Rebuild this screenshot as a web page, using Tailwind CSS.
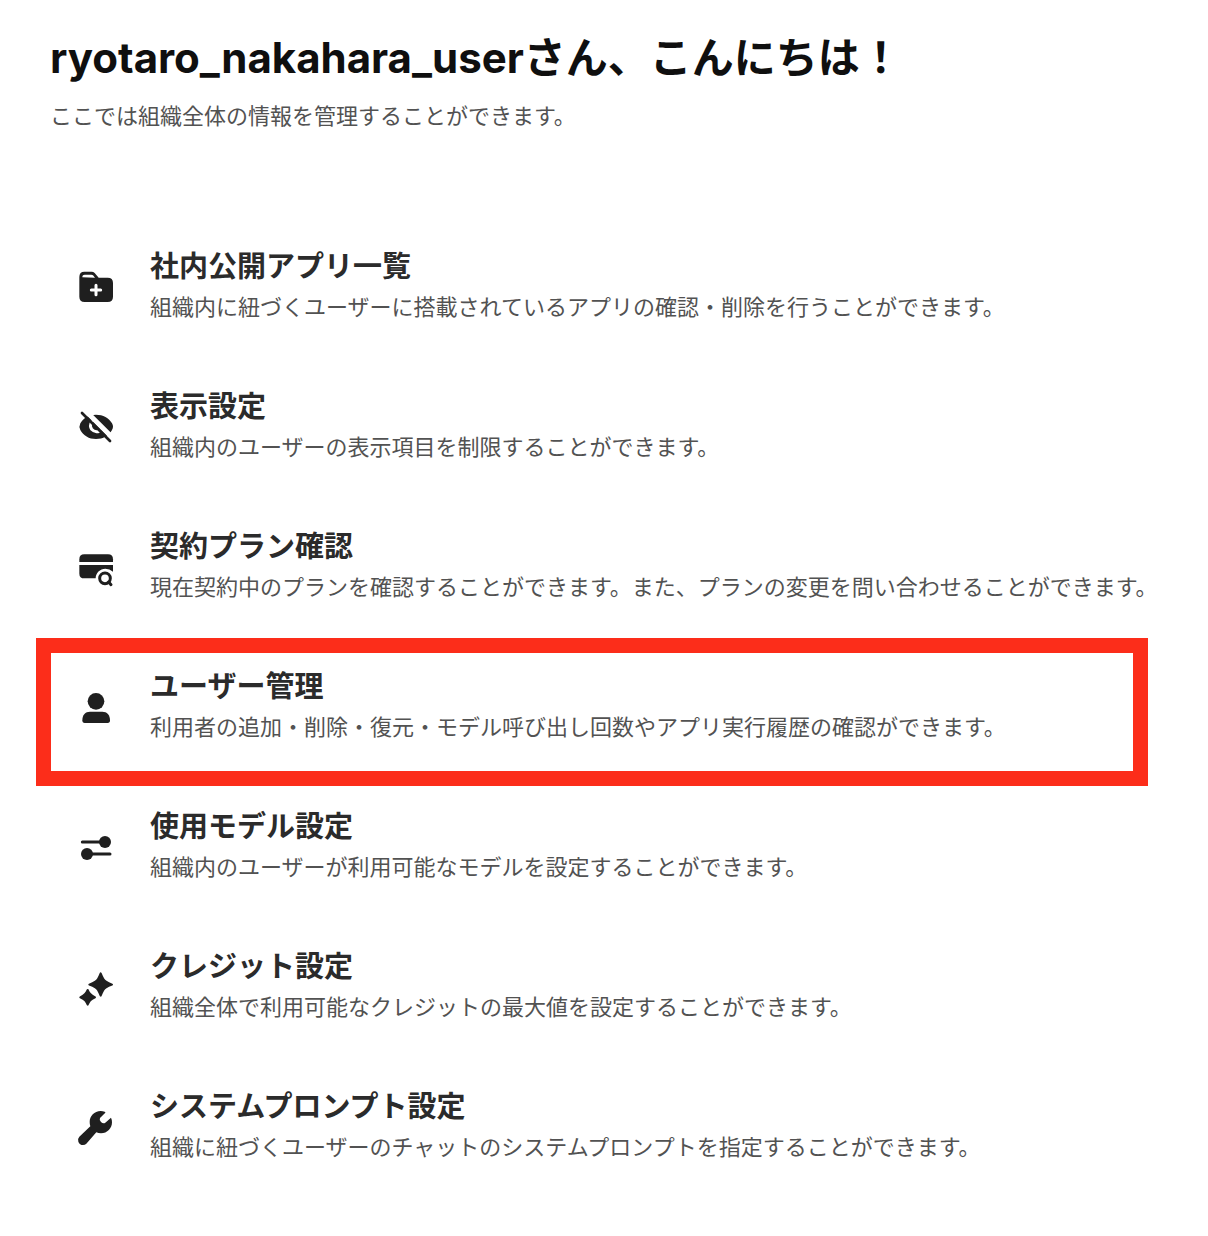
<!DOCTYPE html>
<html lang="ja">
<head>
    <meta charset="UTF-8">
    <meta name="viewport" content="width=device-width, initial-scale=1.0">
    <title>組織管理</title>
    <script src="https://cdn.jsdelivr.net/npm/@tailwindcss/browser@4"></script>
</head>
<body class="bg-white font-[Inter,'Noto_Sans_CJK_JP',sans-serif] text-[#2b2b2b]">

    <main class="px-[50px] pt-7 pb-16">

        <!-- greeting -->
        <header class="mb-[110px]">
            <h1 class="text-[42px] leading-[60px] font-bold text-[#0f0f0f]">ryotaro_nakahara_userさん、こんにちは！</h1>
            <p class="pt-[9px] text-[22px] leading-[38px] text-[#525252]">ここでは組織全体の情報を管理することができます。</p>
        </header>

        <!-- menu -->
        <nav>
            <ul class="flex flex-col gap-[60px]">
                <li>
                    <a href="#apps" class="flex items-center gap-7 pl-5">
                        <svg class="mt-1 size-[52px] shrink-0" viewBox="0 3 156 156" fill="#1f1f1f" aria-hidden="true">
                            <path d="M28 51Q28 35 43 35H65Q70 35 74 39L86 53H113Q129 53 129 69V110Q129 126 113 126H44Q28 126 28 110Z"/>
                            <path d="M37 52V50Q37 44 44 44H64Q67 44 69 46L75 53Z" fill="#fff"/>
                            <path d="M78 76V104M64 90H92" fill="none" stroke="#fff" stroke-width="9" stroke-linecap="round"/>
                        </svg>
                        <div>
                            <h2 class="text-[29px] leading-[44px] font-bold">社内公開アプリ一覧</h2>
                            <p class="text-[22px] leading-[36px] text-[#525252]">組織内に紐づくユーザーに搭載されているアプリの確認・削除を行うことができます。</p>
                        </div>
                    </a>
                </li>
                <li>
                    <a href="#display" class="flex items-center gap-7 pl-5">
                        <svg class="mt-1 size-[52px] shrink-0" viewBox="0 3 156 156" fill="#1f1f1f" aria-hidden="true">
                            <path d="M78 44C99 44 117 54 126 70Q132 80 126 90C117 107 99 117 78 117C57 117 40 107 31 90Q26 80 31 70C40 54 57 44 78 44Z"/>
                            <path d="M65 66Q58 77 65 88Q75 99 89 93" fill="none" stroke="#fff" stroke-width="9" stroke-linecap="round"/>
                            <path d="M44 30L132 118" stroke="#fff" stroke-width="15"/>
                            <path d="M36 39L120 123" stroke="#1f1f1f" stroke-width="8" stroke-linecap="round"/>
                        </svg>
                        <div>
                            <h2 class="text-[29px] leading-[44px] font-bold">表示設定</h2>
                            <p class="text-[22px] leading-[36px] text-[#525252]">組織内のユーザーの表示項目を制限することができます。</p>
                        </div>
                    </a>
                </li>
                <li>
                    <a href="#plan" class="flex items-center gap-7 pl-5">
                        <svg class="mt-1 size-[52px] shrink-0" viewBox="0 -6 156 156" fill="#1f1f1f" aria-hidden="true">
                            <path d="M28 57V49Q28 34 43 34H114Q129 34 129 49V57Z"/>
                            <path d="M28 66H129V86Q119 77 106 77C90 77 77 90 77 106H43Q28 106 28 92Z"/>
                            <circle cx="105" cy="106" r="16" fill="none" stroke="#1f1f1f" stroke-width="9"/>
                            <path d="M116 117L123 125" stroke="#1f1f1f" stroke-width="9" stroke-linecap="round"/>
                        </svg>
                        <div>
                            <h2 class="text-[29px] leading-[44px] font-bold">契約プラン確認</h2>
                            <p class="text-[22px] leading-[36px] text-[#525252]">現在契約中のプランを確認することができます。また、プランの変更を問い合わせることができます。</p>
                        </div>
                    </a>
                </li>
                <li class="relative">
                    <!-- red highlight frame -->
                    <div class="pointer-events-none absolute -top-[27px] right-[10px] -bottom-[41px] -left-[14px] border-[15px] border-[#fc2d1a]"></div>
                    <a href="#users" class="flex items-center gap-7 pl-5">
                        <svg class="mt-1 size-[52px] shrink-0" viewBox="0 -6 156 156" fill="#1f1f1f" aria-hidden="true">
                            <circle cx="78" cy="55" r="25"/>
                            <path d="M37 112C37 96 46 86 60 86H97C111 86 120 96 120 112Q120 120 113 120H44Q37 120 37 112Z"/>
                        </svg>
                        <div>
                            <h2 class="text-[29px] leading-[44px] font-bold">ユーザー管理</h2>
                            <p class="text-[22px] leading-[36px] text-[#525252]">利用者の追加・削除・復元・モデル呼び出し回数やアプリ実行履歴の確認ができます。</p>
                        </div>
                    </a>
                </li>
                <li>
                    <a href="#models" class="flex items-center gap-7 pl-5">
                        <svg class="mt-1 size-[52px] shrink-0" viewBox="0 -3 156 156" fill="#1f1f1f" aria-hidden="true">
                            <path d="M37 60H104M51 96H120" stroke="#1f1f1f" stroke-width="9" stroke-linecap="round"/>
                            <circle cx="105" cy="60" r="18"/>
                            <circle cx="51" cy="96" r="18"/>
                        </svg>
                        <div>
                            <h2 class="text-[29px] leading-[44px] font-bold">使用モデル設定</h2>
                            <p class="text-[22px] leading-[36px] text-[#525252]">組織内のユーザーが利用可能なモデルを設定することができます。</p>
                        </div>
                    </a>
                </li>
                <li>
                    <a href="#credits" class="flex items-center gap-7 pl-5">
                        <svg class="mt-1 size-[52px] shrink-0" viewBox="0 -6 156 156" fill="#1f1f1f" stroke="#1f1f1f" stroke-width="6" stroke-linejoin="round" aria-hidden="true">
                            <path d="M92 31Q96 41 100 48Q103 53 108 56Q115 60 126 65Q115 69 108 73Q103 76 100 81Q96 88 92 98Q88 88 84 81Q81 76 76 73Q69 69 58 65Q69 60 76 56Q81 53 84 48Q88 41 92 31Z"/>
                            <path d="M53 81Q56 88 60 92Q65 97 75 103Q65 108 60 113Q56 118 53 125Q50 118 46 113Q41 108 31 103Q41 97 46 92Q50 88 53 81Z"/>
                        </svg>
                        <div>
                            <h2 class="text-[29px] leading-[44px] font-bold">クレジット設定</h2>
                            <p class="text-[22px] leading-[36px] text-[#525252]">組織全体で利用可能なクレジットの最大値を設定することができます。</p>
                        </div>
                    </a>
                </li>
                <li>
                    <a href="#prompt" class="flex items-center gap-7 pl-5">
                        <svg class="mt-1 size-[52px] shrink-0" viewBox="0 -3 156 156" fill="#1f1f1f" aria-hidden="true">
                            <path d="M104 29Q98 27 92 27C73 27 59 42 59 60Q59 68 61 73L28 104Q22 110 25 119Q29 129 39 129Q45 129 49 125L79 91Q85 94 93 94C112 94 126 79 126 61Q126 53 123 47L105 63Q99 66 93 60Q87 54 90 48L106 32Q107 30 104 29Z"/>
                        </svg>
                        <div>
                            <h2 class="text-[29px] leading-[44px] font-bold">システムプロンプト設定</h2>
                            <p class="text-[22px] leading-[36px] text-[#525252]">組織に紐づくユーザーのチャットのシステムプロンプトを指定することができます。</p>
                        </div>
                    </a>
                </li>
            </ul>
        </nav>

    </main>

</body>
</html>
